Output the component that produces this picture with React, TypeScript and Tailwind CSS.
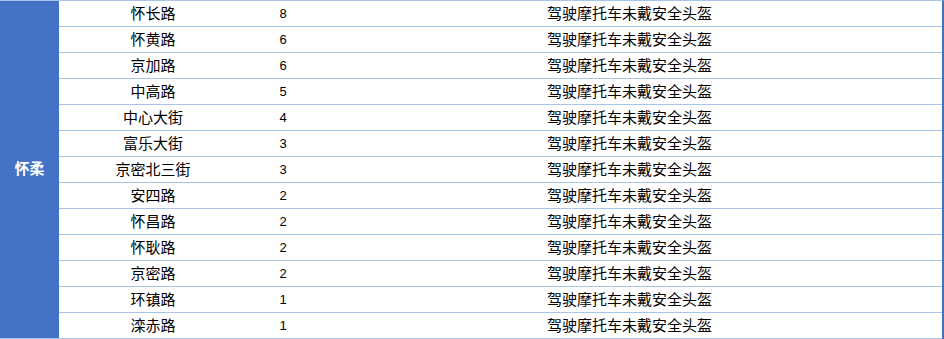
const rows: [string, number][] = [
  ["怀长路", 8],
  ["怀黄路", 6],
  ["京加路", 6],
  ["中高路", 5],
  ["中心大街", 4],
  ["富乐大街", 3],
  ["京密北三街", 3],
  ["安四路", 2],
  ["怀昌路", 2],
  ["怀耿路", 2],
  ["京密路", 2],
  ["环镇路", 1],
  ["滦赤路", 1],
];

export default function App() {
  return (
    <div
      className="flex w-[944px] h-[339px] bg-white text-[15px] text-black"
      style={{ fontFamily: '"Liberation Sans", "Noto Sans CJK SC", sans-serif' }}
    >
      <div className="w-[59px] flex items-center justify-center bg-[#4472c4] border-y border-[#a9c4eb] text-white font-bold">
        怀柔
      </div>
      <div className="flex-1 border-t border-[#a9c4eb] border-r-2 border-r-[#4472c4]">
        {rows.map(([road, n]) => (
          <div
            key={road}
            className="grid grid-cols-[188px_70px_1fr] h-[26px] border-b border-[#a9c4eb] items-center leading-none"
          >
            <span className="text-center">{road}</span>
            <span className="text-center text-[13px] pl-[2px]">{n}</span>
            <span className="text-center">驾驶摩托车未戴安全头盔</span>
          </div>
        ))}
      </div>
    </div>
  );
}
